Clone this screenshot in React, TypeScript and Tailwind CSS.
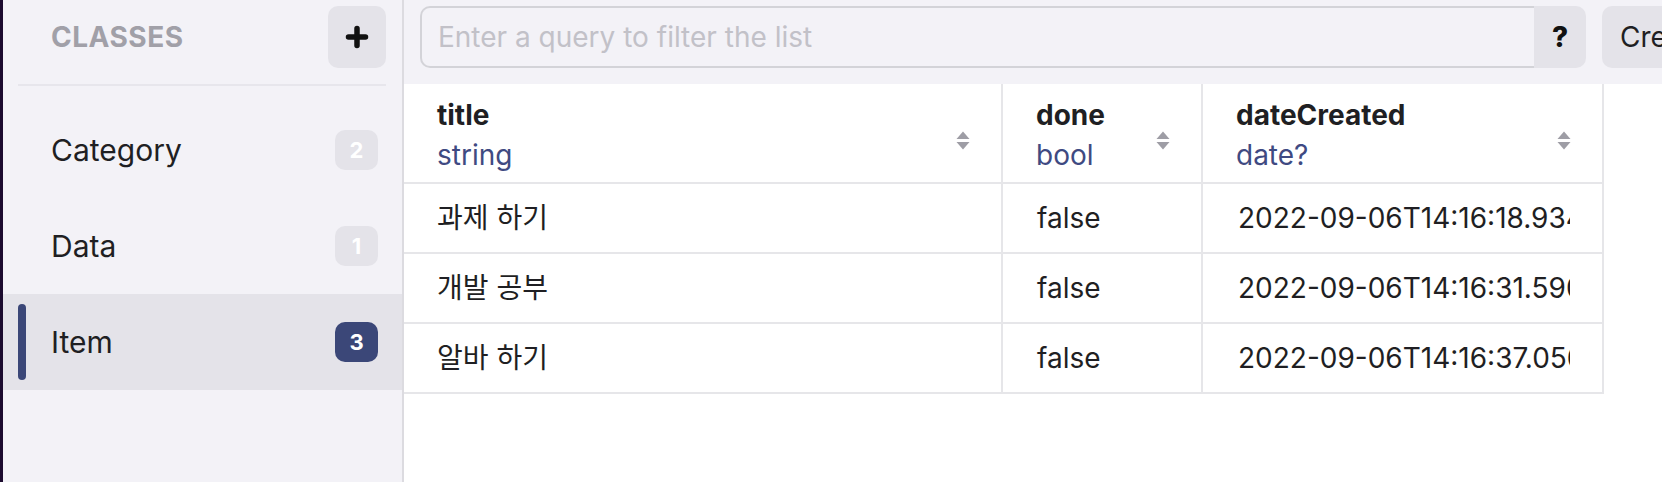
import React from 'react'

interface ClassEntry {
  name: string
  count: number
}

interface Column {
  name: string
  type: string
  width: string
}

const classes: ClassEntry[] = [
  { name: 'Category', count: 2 },
  { name: 'Data', count: 1 },
  { name: 'Item', count: 3 },
]

const rows = [
  { title: '과제 하기', done: 'false', dateCreated: '2022-09-06T14:16:18.934Z' },
  { title: '개발 공부', done: 'false', dateCreated: '2022-09-06T14:16:31.590Z' },
  { title: '알바 하기', done: 'false', dateCreated: '2022-09-06T14:16:37.056Z' },
]

function SortIcon() {
  return (
    <svg width="14" height="19" viewBox="0 0 14 19" className="mt-[4px] shrink-0 self-center text-[#9e9da5]">
      <path d="M7 0.5 L13.5 8 L0.5 8 Z" fill="currentColor" />
      <path d="M0.5 11 L13.5 11 L7 18.5 Z" fill="currentColor" />
    </svg>
  )
}

function PlusIcon() {
  return (
    <svg width="24" height="24" viewBox="0 0 24 24">
      <path d="M12 3.5v17M3.5 12h17" stroke="#111" strokeWidth="5.5" strokeLinecap="round" />
    </svg>
  )
}

function Sidebar({ selected }: { selected: string }) {
  return (
    <aside className="flex w-[401px] shrink-0 flex-col border-r-2 border-[#dcdbe0] bg-[#f3f2f7]">
      <div className="flex items-center justify-between pl-[48px] pr-[16px] pt-[6px] pb-[16px]">
        <span className="text-[28px] font-bold tracking-[0.5px] text-[#a1a0a8]">CLASSES</span>
        <button className="flex h-[62px] w-[58px] items-center justify-center rounded-[10px] bg-[#e4e3e9]">
          <PlusIcon />
        </button>
      </div>
      <div className="mr-[16px] ml-[15px] h-[2px] bg-[#e7e6ec]" />
      <div className="mt-[16px] flex flex-col">
        {classes.map(c => {
          const active = c.name === selected
          return (
            <div
              key={c.name}
              className={`flex h-[96px] items-center pl-[15px] pr-[24px] ${active ? 'bg-[#e4e3e9]' : ''}`}
            >
              <div className={`h-[76px] w-[8px] rounded-full ${active ? 'bg-[#3b4778]' : 'bg-transparent'}`} />
              <span className="ml-[25px] flex-1 text-[30px] text-[#1f1f23]">{c.name}</span>
              <span
                className={`flex h-[40px] min-w-[43px] items-center justify-center rounded-[10px] px-[14px] text-[22px] font-bold text-white ${
                  active ? 'bg-[#3b4778]' : 'bg-[#e4e3e9]'
                }`}
              >
                {c.count}
              </span>
            </div>
          )
        })}
      </div>
    </aside>
  )
}

function Toolbar() {
  return (
    <div className="flex h-[84px] shrink-0 items-start gap-[16px] bg-[#f3f2f7] pl-[16px] pt-[6px]">
      <div className="flex h-[62px] w-[1166px] shrink-0">
        <div className="flex flex-1 items-center rounded-l-[10px] border-2 border-r-0 border-[#d3d3d8] pl-[16px]">
          <span className="text-[28px] text-[#c2c1c8]">Enter a query to filter the list</span>
        </div>
        <button className="flex w-[52px] items-center justify-center rounded-r-[10px] bg-[#e4e3e9] text-[28px] font-extrabold text-[#111]">
          ?
        </button>
      </div>
      <button className="flex h-[62px] shrink-0 items-center rounded-[10px] bg-[#e4e3e9] px-[18px] text-[28px] text-[#1f1f23]">
        Create
      </button>
    </div>
  )
}

function Table() {
  const columns: Column[] = [
    { name: 'title', type: 'string', width: 'w-[599px]' },
    { name: 'done', type: 'bool', width: 'w-[200px]' },
    { name: 'dateCreated', type: 'date?', width: 'w-[401px]' },
  ]

  return (
    <div className="flex w-[1200px] flex-col">
      <div className="flex h-[100px]">
        {columns.map(col => (
          <div
            key={col.name}
            className={`${col.width} flex items-start justify-between border-r-2 border-b-2 border-[#e6e6e9] pt-[11px] pl-[33px] pr-[31px]`}
          >
            <div className="flex flex-col leading-[40px]">
              <span className="text-[28px] font-bold text-[#1f1f23]">{col.name}</span>
              <span className="text-[28px] text-[#3f4a82]">{col.type}</span>
            </div>
            <SortIcon />
          </div>
        ))}
      </div>
      {rows.map((r, i) => (
        <div key={i} className="flex h-[70px] text-[28px] text-[#1f1f23]">
          <div className="flex w-[599px] items-center border-r-2 border-b-2 border-[#e6e6e9] px-[33px]">
            {r.title}
          </div>
          <div className="flex w-[200px] items-center border-r-2 border-b-2 border-[#e6e6e9] px-[34px]">
            {r.done}
          </div>
          <div className="flex w-[401px] items-center border-r-2 border-b-2 border-[#e6e6e9] pl-[35px] pr-[32px]">
            <div className="overflow-hidden whitespace-nowrap">{r.dateCreated}</div>
          </div>
        </div>
      ))}
    </div>
  )
}

export default function App() {
  return (
    <div className="flex h-[482px] w-[1662px] overflow-hidden bg-white font-['Inter','Noto_Sans_CJK_KR',sans-serif]">
      <div className="w-[3px] shrink-0 bg-[#1c0b2f]" />
      <Sidebar selected="Item" />
      <main className="flex min-w-0 flex-1 flex-col">
        <Toolbar />
        <Table />
      </main>
    </div>
  )
}
